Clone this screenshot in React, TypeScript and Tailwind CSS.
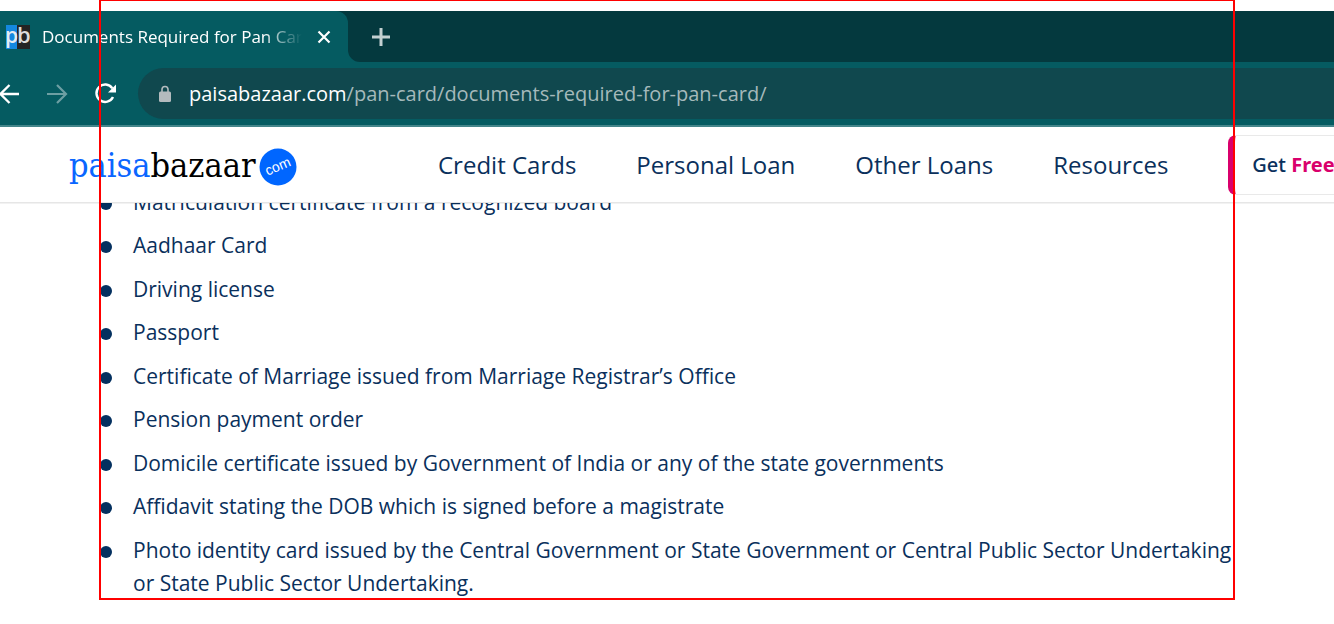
import React from "react";

const navItems = ["Credit Cards", "Personal Loan", "Other Loans", "Resources"];

const documents = [
  "Matriculation certificate from a recognized board",
  "Aadhaar Card",
  "Driving license",
  "Passport",
  "Certificate of Marriage issued from Marriage Registrar’s Office",
  "Pension payment order",
  "Domicile certificate issued by Government of India or any of the state governments",
  "Affidavit stating the DOB which is signed before a magistrate",
  "Photo identity card issued by the Central Government or State Government or Central Public Sector Undertaking or State Public Sector Undertaking.",
];

function TabStrip() {
  return (
    <div className="flex h-[51px] items-stretch bg-[#04393e]">
      <div className="relative flex w-[348px] shrink-0 items-center rounded-tr-[12px] bg-[#055b61] pl-[6px]">
        <svg width="24" height="24" viewBox="0 0 24 24" aria-hidden="true">
          <rect width="11" height="24" fill="#1488e0" />
          <rect x="11" width="13" height="24" fill="#242424" />
          <text x="-1" y="18" fontSize="21" fontWeight="600" fill="#e4edf2" fontFamily="Open Sans, sans-serif">p</text>
          <text x="11" y="18" fontSize="22" fontWeight="600" fill="#dcdcdc" fontFamily="Open Sans, sans-serif">b</text>
        </svg>
        <span className="ml-3 w-[260px] overflow-hidden whitespace-nowrap text-[17px] text-white mask-r-from-85% mask-r-to-100%">
          Documents Required for Pan Card
        </span>
        <button aria-label="Close tab" className="ml-[14px]">
          <svg width="16" height="16" viewBox="0 0 16 16" stroke="#fff" strokeWidth="2.2" fill="none">
            <path d="M2.5 2.5l11 11M13.5 2.5l-11 11" />
          </svg>
        </button>
        <svg className="absolute bottom-0 left-full" width="12" height="12" viewBox="0 0 12 12" aria-hidden="true">
          <path d="M0 0A12 12 0 0 0 12 12H0z" fill="#055b61" />
        </svg>
      </div>
      <button aria-label="New tab" className="ml-[23px]">
        <svg width="20" height="20" viewBox="0 0 20 20" stroke="#c3d0d1" strokeWidth="3" fill="none">
          <path d="M10 1v18M1 10h18" />
        </svg>
      </button>
    </div>
  );
}

function Toolbar() {
  return (
    <div className="flex h-[65px] items-center border-b-2 border-[#44858a] bg-[#055b61]">
      <button aria-label="Back" className="shrink-0">
        <svg width="20" height="22" viewBox="0 0 20 22" stroke="#fff" strokeWidth="2.3" fill="none">
          <path d="M19 11H0M9.500 2L0.500 11l9 9" />
        </svg>
      </button>
      <button aria-label="Forward" className="ml-[26px] shrink-0">
        <svg width="22" height="22" viewBox="0 0 22 22" stroke="#6d9fa3" strokeWidth="2.200" fill="none">
          <path d="M1 11h19M11 2l9 9-9 9" />
        </svg>
      </button>
      <button aria-label="Reload" className="ml-[25px] shrink-0">
        <svg width="24" height="24" viewBox="0 0 24 24" fill="none">
          <path d="M19.300 6.200A8.700 8.700 0 1 0 20 15" stroke="#fff" strokeWidth="2.400" />
          <path d="M23 2.500v8h-8z" fill="#fff" />
        </svg>
      </button>
      <div className="ml-[21px] flex h-[51px] min-w-0 flex-1 items-center rounded-l-full bg-[#10484e] pl-5">
        <svg width="14" height="18" viewBox="0 0 14 18" aria-hidden="true">
          <rect x="1" y="6.500" width="12" height="10.500" rx="1.500" fill="#b3bbbe" />
          <path d="M4 7V4.500a3 3 0 0 1 6 0V7" stroke="#b3bbbe" strokeWidth="1.600" fill="none" />
        </svg>
        <a href="#top" className="ml-[17px] whitespace-nowrap text-[20px] text-[#a5b9bb]">
          <span className="text-white">paisabazaar.com</span>/pan-card/documents-required-for-pan-card/
        </a>
      </div>
    </div>
  );
}

function SiteHeader() {
  return (
    <header className="relative z-10 flex h-[76px] items-center overflow-hidden border-b border-[#e6e6e6] bg-white shadow-2xs">
      <a href="#home" className="ml-[69px] flex w-[228px] shrink-0 items-center justify-between">
        <span className="font-['DejaVu_Serif_Condensed','Liberation_Serif',serif] text-[34px] leading-[48px] text-[#0a66ff]">
          paisa<span className="text-black">bazaar</span>
        </span>
        <svg className="mt-1 shrink-0" width="38" height="38" viewBox="0 0 38 38">
          <circle cx="19" cy="19" r="18.500" fill="#0066ff" />
          <text x="19" y="23" textAnchor="middle" transform="rotate(-23 19 19)" fontSize="14" fill="#fff" fontFamily="Liberation Sans, sans-serif">com</text>
        </svg>
      </a>
      <nav className="ml-[141px] flex shrink-0 gap-[60px] whitespace-nowrap text-[24px] text-[#0a305c]">
        {navItems.map((item) => (
          <a key={item} href="#menu">{item}</a>
        ))}
      </nav>
      <a
        href="#score"
        className="ml-[60px] flex h-[60px] shrink-0 items-center whitespace-nowrap rounded-lg border border-l-[7px] border-[#e9e9e9] border-l-[#d9006c] px-[17px] font-['Noto_Sans',sans-serif] text-[20px] font-medium text-[#0a305c]"
      >
        Get&nbsp;<b className="font-bold text-[#d9006c]">Free</b>&nbsp;Credit Score
      </a>
    </header>
  );
}

export default function App() {
  return (
    <div className="relative overflow-hidden bg-white pt-[11px] font-['Open_Sans',sans-serif]">
      <TabStrip />
      <Toolbar />
      <SiteHeader />
      <main className="-mt-[17px] pb-6 pl-[100px] pr-[96px]">
        <ul className="text-[21px] leading-[33px] text-[#0a305c]">
          {documents.map((doc) => (
            <li key={doc} className="flex items-start odd:mb-[10px] even:mb-[11px]">
              <span className="mt-[12px] mr-[21px] size-3 shrink-0 rounded-full bg-[#04305f]" />
              <span>{doc}</span>
            </li>
          ))}
        </ul>
      </main>
      <div className="pointer-events-none absolute inset-x-[99px] -top-px z-20 h-[601px] border-2 border-[#ff0000]" />
    </div>
  );
}
